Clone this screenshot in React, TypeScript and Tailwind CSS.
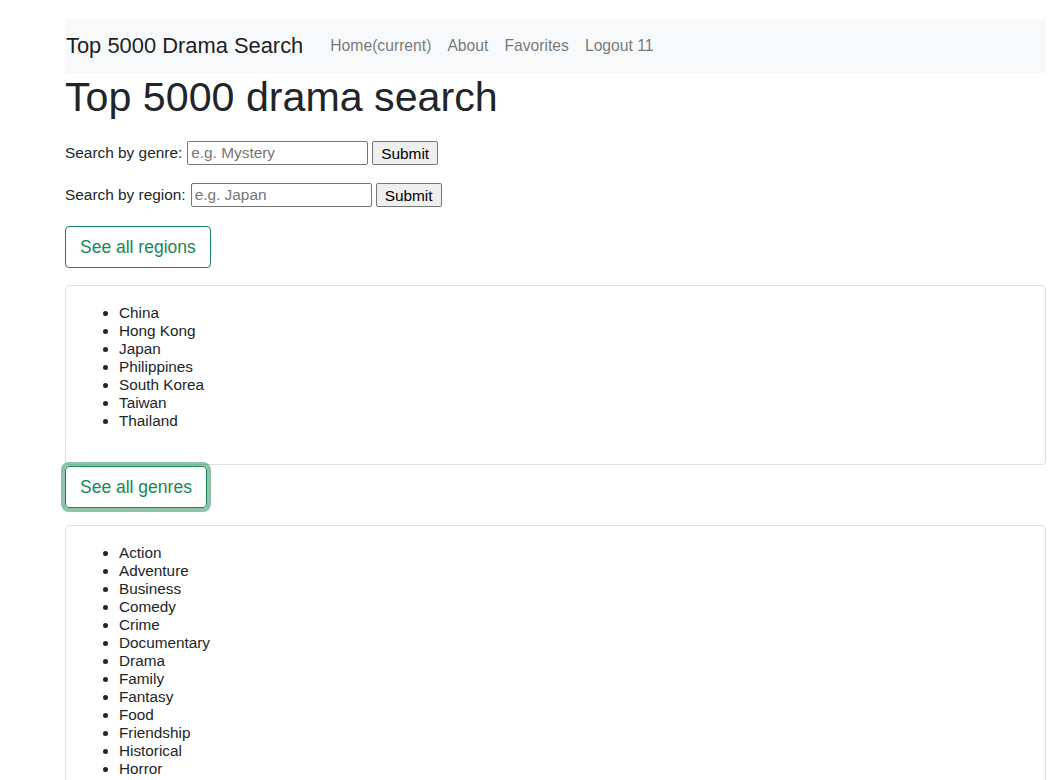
import React from 'react';

const regions = ['China', 'Hong Kong', 'Japan', 'Philippines', 'South Korea', 'Taiwan', 'Thailand'];

const genres = [
    'Action', 'Adventure', 'Business', 'Comedy', 'Crime', 'Documentary', 'Drama', 'Family',
    'Fantasy', 'Food', 'Friendship', 'Historical', 'Horror', 'Law', 'Medical', 'Melodrama',
    'Military', 'Music', 'Mystery', 'Political', 'Psychological', 'Romance', 'School', 'Sci-Fi',
    'Sports', 'Supernatural', 'Thriller', 'Youth',
];

const SearchForm: React.FC<{ label: string; placeholder: string; className?: string }> = ({ label, placeholder, className }) => (
    <form className={`flex items-center h-[23px] ${className ?? ''}`} onSubmit={(e) => e.preventDefault()}>
        <label className="text-[15.4px]">{label}</label>
        <input
            type="text"
            placeholder={placeholder}
            className="ml-[5px] w-[181px] h-[24px] border border-[#767676] rounded-[2px] px-[3px] text-[15.4px] placeholder:text-[#757575] outline-none"
        />
        <button type="submit" className="ml-[4px] h-[24px] px-[8px] bg-[#efefef] border border-[#767676] rounded-[2px] text-[15.4px] text-black">
            Submit
        </button>
    </form>
);

const ListCard: React.FC<{ items: string[]; className?: string }> = ({ items, className }) => (
    <div className={`border border-[#dfdfdf] rounded-[4px] pt-[18px] pb-[34px] pl-[20px] pr-[20px] ${className ?? ''}`}>
        <ul className="list-disc pl-[33px] text-[15.3px] leading-[18px]">
            {items.map((item) => (
                <li key={item}>{item}</li>
            ))}
        </ul>
    </div>
);

export default function App() {
    return (
        <div className="min-h-screen bg-white font-['Liberation_Sans',Arial,sans-serif] text-[#212529]">
            <div className="ml-[65px] w-[981px] pt-[19px]">
                <nav className="h-[54px] bg-[#f8f9fa] flex items-center">
                    <span className="ml-[1px] mr-[19px] text-[21.9px] text-black/90">Top 5000 Drama Search</span>
                    <div className="flex items-center text-[15.7px] text-black/55">
                        <a className="px-[8px]">Home(current)</a>
                        <a className="px-[8px]">About</a>
                        <a className="px-[8px]">Favorites</a>
                        <a className="px-[8px]">Logout 11</a>
                    </div>
                </nav>

                <h1 className="text-[41.2px] leading-[48px]">Top 5000 drama search</h1>

                <SearchForm label="Search by genre:" placeholder="e.g. Mystery" className="mt-[20px]" />
                <SearchForm label="Search by region:" placeholder="e.g. Japan" className="mt-[19px]" />

                <button className="mt-[20px] h-[42px] px-[14px] border border-[#198754] rounded-[4px] text-[17.5px] text-[#198754]">
                    See all regions
                </button>

                <ListCard items={regions} className="mt-[17px]" />

                <button className="mt-[1px] h-[42px] px-[14px] border border-[#198754] rounded-[4px] text-[17.5px] text-[#198754] shadow-[0_0_0_4px_rgba(25,135,84,0.5)]">
                    See all genres
                </button>

                <ListCard items={genres} className="mt-[17px]" />
            </div>
        </div>
    );
}
